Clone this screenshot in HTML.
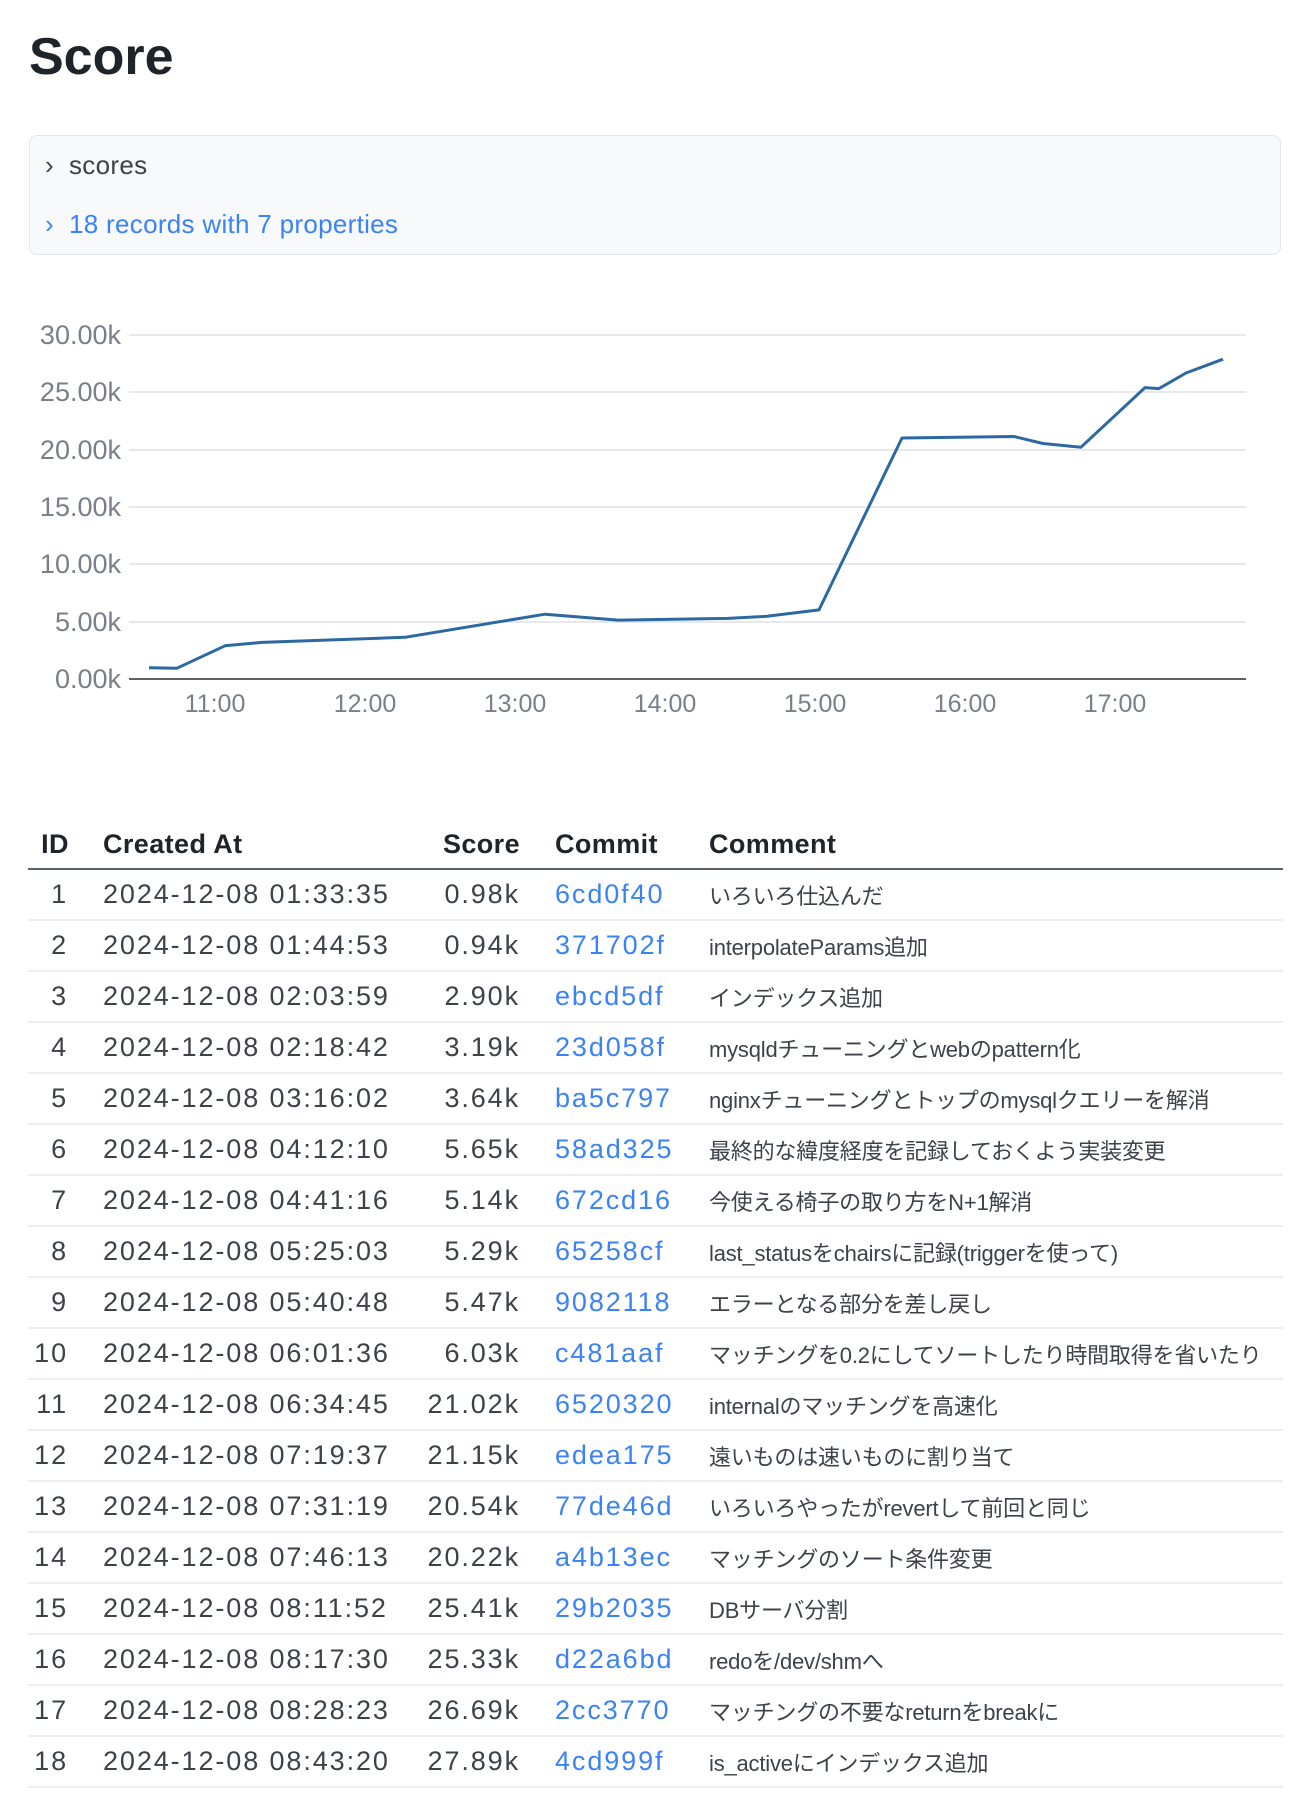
<!DOCTYPE html>
<html><head><meta charset="utf-8"><style>
html,body{margin:0;padding:0;background:#fff;width:1300px;height:1807px;overflow:hidden;font-family:"Liberation Sans","Noto Sans CJK JP",sans-serif;}
.t{position:absolute;white-space:nowrap;}
h1{position:absolute;left:29px;top:27px;margin:0;font-size:52px;font-weight:bold;color:#1f232a;}
.box{position:absolute;left:29px;top:135px;width:1252px;height:120px;background:#f8f9fa;border:1px solid #e4e6e9;border-radius:8px;box-sizing:border-box;}
table{position:absolute;left:28px;top:820px;width:1255px;border-collapse:collapse;table-layout:fixed;font-size:27px;letter-spacing:1.9px;color:#3d4148;}
th{font-weight:bold;color:#1f232a;text-align:left;height:48px;border-bottom:2px solid #5b6068;padding:0;letter-spacing:0.4px;white-space:nowrap;}
td{height:49px;border-bottom:2px solid #eceef0;padding:0;white-space:nowrap;overflow:visible;}
.id{text-align:right;padding-right:8px;}
th.id{text-align:center;padding-left:6px;padding-right:0px;}
.dt{padding-left:27px}
.sc{text-align:right;padding-right:0}
.cm{color:#3b82f6;padding-left:35px}
th.c4{padding-left:35px}
.co{padding-left:0px;font-size:22px;letter-spacing:-0.2px}
th.c5{padding-left:0}
</style></head><body>
<h1>Score</h1>
<div class="box"></div>
<div class="t" style="left:45px;top:150px;font-size:26px;letter-spacing:0.3px;color:#3d4148">›&nbsp;&nbsp;scores</div>
<div class="t" style="left:45px;top:209px;font-size:26px;letter-spacing:0.3px;color:#3b82f6">›&nbsp;&nbsp;18 records with 7 properties</div>
<svg style="position:absolute;left:0;top:300px" width="1300" height="440" viewBox="0 300 1300 440">
<g stroke="#e6e8eb" stroke-width="2">
<line x1="129" x2="1246" y1="335" y2="335"/><line x1="129" x2="1246" y1="392" y2="392"/><line x1="129" x2="1246" y1="450" y2="450"/><line x1="129" x2="1246" y1="507" y2="507"/><line x1="129" x2="1246" y1="564" y2="564"/><line x1="129" x2="1246" y1="622" y2="622"/>
</g>
<line x1="129" x2="1246" y1="679" y2="679" stroke="#5b6068" stroke-width="2"/>
<g font-size="27" fill="#7a7f87" text-anchor="end" font-family="Liberation Sans,sans-serif">
<text x="121" y="344">30.00k</text><text x="121" y="401">25.00k</text><text x="121" y="459">20.00k</text><text x="121" y="516">15.00k</text><text x="121" y="573">10.00k</text><text x="121" y="631">5.00k</text><text x="121" y="688">0.00k</text>
</g>
<g font-size="25" fill="#7a7f87" text-anchor="middle" font-family="Liberation Sans,sans-serif">
<text x="215" y="712">11:00</text><text x="365" y="712">12:00</text><text x="515" y="712">13:00</text><text x="665" y="712">14:00</text><text x="815" y="712">15:00</text><text x="965" y="712">16:00</text><text x="1115" y="712">17:00</text>
</g>
<polyline fill="none" stroke="#2c69a3" stroke-width="3" stroke-linejoin="round" points="149,667.8 177,668.2 225,645.8 262,642.4 405,637.3 545,614.2 618,620.1 728,618.4 767,616.3 819,609.9 902,438 1014,436.5 1043,443.5 1081,447.2 1145,387.6 1159,388.6 1186,373 1223,359.2"/>
</svg>
<table>
<colgroup><col style="width:48px"><col style="width:322px"><col style="width:122px"><col style="width:189px"><col></colgroup>
<tr><th class="id">ID</th><th class="dt">Created At</th><th class="sc">Score</th><th class="c4">Commit</th><th class="c5">Comment</th></tr>
<tr><td class="id">1</td><td class="dt">2024-12-08 01:33:35</td><td class="sc">0.98k</td><td class="cm">6cd0f40</td><td class="co">いろいろ仕込んだ</td></tr>
<tr><td class="id">2</td><td class="dt">2024-12-08 01:44:53</td><td class="sc">0.94k</td><td class="cm">371702f</td><td class="co">interpolateParams追加</td></tr>
<tr><td class="id">3</td><td class="dt">2024-12-08 02:03:59</td><td class="sc">2.90k</td><td class="cm">ebcd5df</td><td class="co">インデックス追加</td></tr>
<tr><td class="id">4</td><td class="dt">2024-12-08 02:18:42</td><td class="sc">3.19k</td><td class="cm">23d058f</td><td class="co">mysqldチューニングとwebのpattern化</td></tr>
<tr><td class="id">5</td><td class="dt">2024-12-08 03:16:02</td><td class="sc">3.64k</td><td class="cm">ba5c797</td><td class="co">nginxチューニングとトップのmysqlクエリーを解消</td></tr>
<tr><td class="id">6</td><td class="dt">2024-12-08 04:12:10</td><td class="sc">5.65k</td><td class="cm">58ad325</td><td class="co">最終的な緯度経度を記録しておくよう実装変更</td></tr>
<tr><td class="id">7</td><td class="dt">2024-12-08 04:41:16</td><td class="sc">5.14k</td><td class="cm">672cd16</td><td class="co">今使える椅子の取り方をN+1解消</td></tr>
<tr><td class="id">8</td><td class="dt">2024-12-08 05:25:03</td><td class="sc">5.29k</td><td class="cm">65258cf</td><td class="co">last_statusをchairsに記録(triggerを使って)</td></tr>
<tr><td class="id">9</td><td class="dt">2024-12-08 05:40:48</td><td class="sc">5.47k</td><td class="cm">9082118</td><td class="co">エラーとなる部分を差し戻し</td></tr>
<tr><td class="id">10</td><td class="dt">2024-12-08 06:01:36</td><td class="sc">6.03k</td><td class="cm">c481aaf</td><td class="co">マッチングを0.2にしてソートしたり時間取得を省いたり</td></tr>
<tr><td class="id">11</td><td class="dt">2024-12-08 06:34:45</td><td class="sc">21.02k</td><td class="cm">6520320</td><td class="co">internalのマッチングを高速化</td></tr>
<tr><td class="id">12</td><td class="dt">2024-12-08 07:19:37</td><td class="sc">21.15k</td><td class="cm">edea175</td><td class="co">遠いものは速いものに割り当て</td></tr>
<tr><td class="id">13</td><td class="dt">2024-12-08 07:31:19</td><td class="sc">20.54k</td><td class="cm">77de46d</td><td class="co">いろいろやったがrevertして前回と同じ</td></tr>
<tr><td class="id">14</td><td class="dt">2024-12-08 07:46:13</td><td class="sc">20.22k</td><td class="cm">a4b13ec</td><td class="co">マッチングのソート条件変更</td></tr>
<tr><td class="id">15</td><td class="dt">2024-12-08 08:11:52</td><td class="sc">25.41k</td><td class="cm">29b2035</td><td class="co">DBサーバ分割</td></tr>
<tr><td class="id">16</td><td class="dt">2024-12-08 08:17:30</td><td class="sc">25.33k</td><td class="cm">d22a6bd</td><td class="co">redoを/dev/shmへ</td></tr>
<tr><td class="id">17</td><td class="dt">2024-12-08 08:28:23</td><td class="sc">26.69k</td><td class="cm">2cc3770</td><td class="co">マッチングの不要なreturnをbreakに</td></tr>
<tr><td class="id">18</td><td class="dt">2024-12-08 08:43:20</td><td class="sc">27.89k</td><td class="cm">4cd999f</td><td class="co">is_activeにインデックス追加</td></tr>
</table>
</body></html>
